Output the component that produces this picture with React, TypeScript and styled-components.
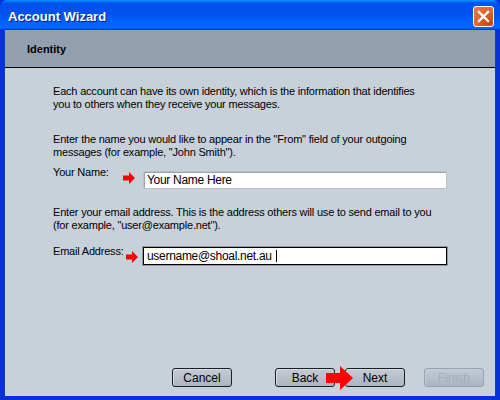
import styled, { createGlobalStyle } from "styled-components";

const Global = createGlobalStyle`
    html, body {
        margin: 0;
        padding: 0;
        background: #ffffff;
    }
    body {
        font-family: "Liberation Sans", Arial, sans-serif;
        font-size: 11px;
        color: #000;
    }
`;

const Arrow = ({ size = 12 }: { size?: number }) => (
    <svg width={size} height={size} viewBox="0 0 12 12">
        <polygon points="0,3.5 6,3.5 6,0 12,6 6,12 6,8.5 0,8.5" fill="#ff0000" />
    </svg>
);

const BigArrow = () => (
    <svg width="28" height="26" viewBox="0 0 28 26">
        <polygon points="0,8 14,8 14,1 27,13 14,25 14,18 0,18" fill="#ff0000" />
    </svg>
);

const App = () => {
    return (
        <Window>
            <Global />
            <TitleBar>
                <Title>Account Wizard</Title>
                <CloseButton>
                    <svg width="13" height="13" viewBox="0 0 13 13">
                        <path d="M2 2 L11 11 M11 2 L2 11" stroke="#fff" strokeWidth="2.4" strokeLinecap="square" />
                    </svg>
                </CloseButton>
            </TitleBar>
            <Frame>
                <Header>Identity</Header>
                <Body>
                    <Para>
                        Each account can have its own identity, which is the information that identifies
                        <br />
                        you to others when they receive your messages.
                    </Para>
                    <Para $top={22}>
                        Enter the name you would like to appear in the "From" field of your outgoing
                        <br />
                        messages (for example, "John Smith").
                    </Para>
                    <FieldRow $top={7}>
                        <Label>Your Name:</Label>
                        <ArrowSlot $left={70} $top={6}>
                            <Arrow />
                        </ArrowSlot>
                        <Input $focused={false} $top={5}>Your Name Here</Input>
                    </FieldRow>
                    <Para $top={17}>
                        Enter your email address. This is the address others will use to send email to you
                        <br />
                        (for example, "user@example.net").
                    </Para>
                    <FieldRow $top={13}>
                        <Label>Email Address:</Label>
                        <ArrowSlot $left={73} $top={6}>
                            <Arrow />
                        </ArrowSlot>
                        <Input $focused={true} $top={2}>
                            username@shoal.net.au <Caret />
                        </Input>
                    </FieldRow>
                </Body>
                <Footer>
                    <Button>Cancel</Button>
                    <Spacer $w={43} />
                    <Button>Back</Button>
                    <Spacer $w={10} />
                    <NextWrap>
                        <BigArrowSlot>
                            <BigArrow />
                        </BigArrowSlot>
                        <Button>Next</Button>
                    </NextWrap>
                    <Spacer $w={19} />
                    <Button $disabled>Finish</Button>
                </Footer>
            </Frame>
        </Window>
    );
};

export default App;

const Window = styled.div`
    width: 500px;
    height: 400px;
    display: flex;
    flex-direction: column;
    background: #0831d9;
    overflow: hidden;
`;
const TitleBar = styled.div`
    height: 30px;
    flex: none;
    display: flex;
    align-items: center;
    justify-content: space-between;
    padding: 0 6px 0 8px;
    box-sizing: border-box;
    border-radius: 7px 7px 0 0;
    background: linear-gradient(
        180deg,
        #0997ff 0%,
        #0053ee 10%,
        #0050ee 40%,
        #0066ff 86%,
        #0066ff 92%,
        #005bff 95%,
        #003dd7 97%,
        #003dd7 100%
    );
`;
const Title = styled.span`
    font-family: "Liberation Sans", Arial, sans-serif;
    font-weight: bold;
    font-size: 13px;
    color: #fff;
    text-shadow: 1px 1px 0 #0a1883;
    padding-top: 3px;
`;
const CloseButton = styled.div`
    width: 21px;
    height: 21px;
    box-sizing: border-box;
    margin-top: 3px;
    border: 1px solid #fff;
    border-radius: 3px;
    display: flex;
    align-items: center;
    justify-content: center;
    background: radial-gradient(circle at 80% 85%, #cc4600 0%, #dc6527 50%, #e87c55 100%);
`;
const Frame = styled.div`
    flex: 1;
    display: flex;
    flex-direction: column;
    margin: 0 4px 4px;
    background: #c8d0da;
    border-left: 1px solid #0b3fbe;
    border-right: 1px solid #0b3fbe;
`;
const Header = styled.div`
    height: 38px;
    flex: none;
    box-sizing: border-box;
    border-bottom: 1px solid #000;
    background: #929fae;
    padding-left: 22px;
    display: flex;
    align-items: center;
    font-family: "Liberation Sans", Arial, sans-serif;
    font-weight: bold;
    font-size: 11px;
`;
const Body = styled.div`
    flex: 1;
    padding: 17px 0 0 48px;
    display: flex;
    flex-direction: column;
`;
const Para = styled.p<{ $top?: number }>`
    margin: ${(p) => p.$top ?? 0}px 0 0;
    font-size: 11px;
    line-height: 13px;
    white-space: nowrap;
    letter-spacing: -0.2px;
`;
const FieldRow = styled.div<{ $top: number }>`
    position: relative;
    display: flex;
    align-items: flex-start;
    margin-top: ${(p) => p.$top}px;
`;
const Label = styled.span`
    width: 90px;
    line-height: 13px;
    letter-spacing: -0.2px;
`;
const ArrowSlot = styled.span<{ $left: number; $top: number }>`
    position: absolute;
    left: ${(p) => p.$left}px;
    top: ${(p) => p.$top}px;
    line-height: 0;
`;
const Input = styled.div<{ $focused: boolean; $top: number }>`
    margin-top: ${(p) => p.$top}px;
    width: 304px;
    height: 18px;
    box-sizing: border-box;
    background: #fff;
    border: 1px solid ${(p) => (p.$focused ? "#000" : "#b9c1ca")};
    box-shadow: ${(p) => (p.$focused ? "0 0 0 1px #8e9aa8" : "inset 1px 1px 0 #9aa4b0")};
    padding: 0 3px;
    font-size: 12px;
    letter-spacing: -0.3px;
    line-height: 16px;
    white-space: nowrap;
    display: flex;
    align-items: center;
`;
const Caret = styled.span`
    display: inline-block;
    width: 1px;
    height: 12px;
    background: #000;
    margin-left: 4px;
`;
const Footer = styled.div`
    display: flex;
    align-items: center;
    padding: 0 0 9px 167px;
`;
const Spacer = styled.div<{ $w: number }>`
    width: ${(p) => p.$w}px;
    flex: none;
`;
const NextWrap = styled.div`
    position: relative;
`;
const BigArrowSlot = styled.div`
    position: absolute;
    left: -19px;
    top: -3px;
    line-height: 0;
    z-index: 1;
`;
const Button = styled.div<{ $disabled?: boolean }>`
    width: 60px;
    height: 19px;
    box-sizing: border-box;
    border: 1px solid ${(p) => (p.$disabled ? "#96a2b0" : "#1a1e24")};
    border-radius: 3px;
    background: linear-gradient(180deg, #c2cad4 0%, #b7c0cb 50%, #aab4c0 100%);
    box-shadow: inset 1px 1px 0 ${(p) => (p.$disabled ? "#c4ccd6" : "#d6dce4")};
    color: ${(p) => (p.$disabled ? "#a3adb9" : "#000")};
    font-size: 12px;
    display: flex;
    align-items: center;
    justify-content: center;
`;
